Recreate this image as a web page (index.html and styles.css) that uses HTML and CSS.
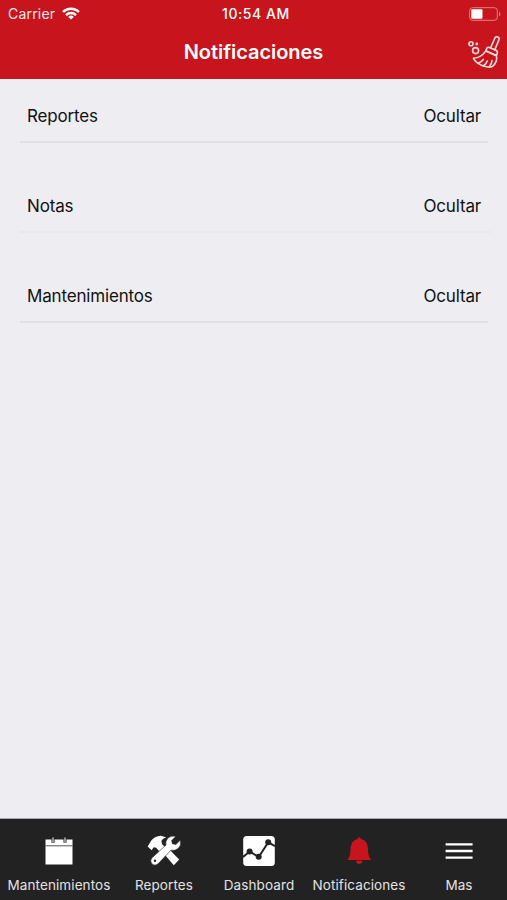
FILE: index.html
```html
<!DOCTYPE html>
<html lang="es">
<head>
  <meta charset="UTF-8" />
  <meta name="viewport" content="width=device-width, initial-scale=1" />
  <title>Notificaciones</title>
  <link rel="stylesheet" href="styles.css">
</head>
<body>

  <header class="header">
    <div class="status-bar">
      <div class="carrier">
        <span>Carrier</span>
        <svg class="wifi" viewBox="0 0 18 13" fill="none" stroke="#fff" stroke-width="2.4">
          <path d="M1 5a11.3 11.3 0 0 1 16 0" />
          <path d="M4 8.1a7.1 7.1 0 0 1 10 0" />
          <path d="M9 12.6 6.2 9.9a4 4 0 0 1 5.6 0z" fill="#fff" stroke="none" />
        </svg>
      </div>
      <div class="time">10:54 AM</div>
      <svg class="battery" viewBox="0 0 32 14">
        <rect x=".7" y=".7" width="27.6" height="12.6" rx="3" fill="none" stroke="#e58085" />
        <rect x="2.3" y="2.3" width="11.2" height="9.4" rx="1" fill="#fff" />
        <path d="M30 4.8q1.5.7 1.5 2.2T30 9.2z" fill="#e58085" />
      </svg>
    </div>
    <div class="nav-bar">
      <h1 class="title">Notificaciones</h1>
      <button class="clear" aria-label="Limpiar">
        <svg viewBox="0 0 32 34" fill="none" stroke="#ffdcdc" stroke-width="1.6" stroke-linejoin="round" stroke-linecap="round">
          <circle cx="3" cy="8.7" r="2" />
          <circle cx="8.8" cy="9" r=".6" fill="#ffdcdc" />
          <circle cx="7.6" cy="15.6" r="3" />
          <path d="M22.5 13 26.9 3Q28 1.1 29.8 1.9T31 4.6L26.8 14.8" />
          <path d="M18.8 13.2Q20 11.6 22 12.7L28 15.3Q30 16.4 29.2 18.6L28.4 20.4 17.8 15.8z" />
          <path d="M17.7 16.1Q13 22.7 5.4 23.3 8.8 29.6 18.5 31.8 22.5 32.8 24.5 31.3 29.7 26.8 28.4 20.8z" />
          <path d="M10.3 28.2Q13.5 26.8 15.3 24.4M15.4 30.8Q18.3 28.7 19.3 26M21.3 31.8Q23.8 28.9 24 25.6" />
        </svg>
      </button>
    </div>
  </header>

  <main class="sections">
    <div class="section">
      <span>Reportes</span>
      <a class="toggle">Ocultar</a>
    </div>
    <div class="section section-light">
      <span>Notas</span>
      <a class="toggle">Ocultar</a>
    </div>
    <div class="section">
      <span>Mantenimientos</span>
      <a class="toggle">Ocultar</a>
    </div>
  </main>

  <nav class="tab-bar">
    <a class="tab">
      <svg viewBox="0 0 34 34">
        <path d="M3.5 5.5h27v25h-27z" fill="#fff" />
        <path d="M3.5 11.8h27" stroke="#555" stroke-width="1" />
        <path d="M11 3.5v5.3M23 3.5v5.3" stroke="#222" stroke-width="3" />
        <path d="M11 3.5v5M23 3.5v5" stroke="#ddd" stroke-width="1.2" />
      </svg>
      <span>Mantenimientos</span>
    </a>
    <a class="tab">
      <svg viewBox="0 0 34 34">
        <path d="M17.6 20.6 22.6 15.8 32.2 25.6 26.8 31.2z" fill="#fff" />
        <path d="M.6 12.6 4.3 6.6Q8.1 2 14 1.8L19.4 3.6Q15.2 4.6 14.4 7.4L15 10 19.2 14.2 14 19.2 9.3 14Q7.6 12.6 6.3 13.8L4.7 16.2z" fill="#fff" />
        <path d="M28.8 2.4Q24.6.9 21 4 17.9 7.1 19 11L4.8 24Q2.6 26.8 4.9 29.9 8 32.4 11.1 29.8L23.9 16.2Q28.4 17.3 31.7 14 34.6 11 33.2 6.2L28.8 10.5 25.4 9.7 24.7 6.5z" fill="#fff" stroke="#222" stroke-width=".6" />
        <circle cx="8" cy="26.8" r="1.2" fill="#222" />
      </svg>
      <span>Reportes</span>
    </a>
    <a class="tab">
      <svg viewBox="0 0 34 34">
        <rect x="1.2" y="2" width="31.6" height="30" rx="3.5" fill="#fff" />
        <path d="M1 23 7.6 17.5 16.7 23 26.2 8.4 33 12.2" fill="none" stroke="#222" stroke-width="2" />
        <g fill="#222">
          <circle cx="7.6" cy="17.4" r="3" />
          <circle cx="16.7" cy="22.8" r="3" />
          <circle cx="26.2" cy="8.2" r="3" />
        </g>
      </svg>
      <span>Dashboard</span>
    </a>
    <a class="tab active">
      <svg viewBox="0 0 34 34" fill="currentColor">
        <path d="M17.2 3.2q1.4 0 1.7 1.7 6.3 1.4 7 8.7.2 8 1.7 10L29 26.1H5.4l1.5-2.5q1.5-2 1.7-10 .7-7.3 7-8.7.3-1.7 1.6-1.7zM14 26.8h6.4q-.4 3.2-3.2 3.2T14 26.8z" />
      </svg>
      <span>Notificaciones</span>
    </a>
    <a class="tab">
      <svg viewBox="0 0 34 34" stroke="#fff" stroke-width="2.3">
        <path d="M3.6 10.3h27M3.6 17h27M3.6 23.7h27" />
      </svg>
      <span>Mas</span>
    </a>
  </nav>

</body>
</html>
```

FILE: styles.css
```css
* {
  box-sizing: border-box;
}

body {
  margin: 0;
  height: 100vh;
  display: flex;
  flex-direction: column;
  overflow: hidden;
  background-color: #eeedf2;
  color: #111;
  font-family: Inter, "Liberation Sans", sans-serif;
}

/* red header: status bar + title */
.header {
  height: 79px;
  flex: none;
  background: #c8141c;
  color: #fff;
}

.status-bar {
  display: grid;
  grid-template-columns: 1fr auto 1fr;
  align-items: center;
  height: 27px;
  padding: 0 6px 0 11px;
  font-size: 14px;
  line-height: 27px;
}

.carrier {
  display: flex;
  align-items: center;
  gap: 7px;
  margin-left: -3px;
  color: #ffe9e9;
  letter-spacing: 0.2px;
}

.wifi {
  width: 18px;
  height: 13px;
}

.time {
  font-size: 14px;
  font-weight: 500;
  letter-spacing: 0.55px;
}

.battery {
  width: 32px;
  height: 14px;
  justify-self: end;
}

.nav-bar {
  display: grid;
  grid-template-columns: 1fr auto 1fr;
  align-items: center;
  height: 50px;
  padding: 0 7px;
}

.title {
  grid-column: 2;
  margin: 0;
  font-size: 20px;
  font-weight: 600;
  letter-spacing: -0.05px;
}

.clear {
  justify-self: end;
  padding: 0;
  border: none;
  background: transparent;
}

.clear svg {
  display: block;
  width: 32px;
  height: 34px;
}

/* section list */
.sections {
  flex: 1;
  display: flex;
  flex-direction: column;
  gap: 37px;
  padding: 11px 19px 0 20px;
}

.section {
  display: flex;
  justify-content: space-between;
  height: 53px;
  padding: 0 7px;
  border-bottom: 2px solid #e1e0e5;
  font-size: 17px;
  line-height: 52px;
  letter-spacing: -0.17px;
}

.section-light {
  margin-right: -3px;
  padding-right: 10px;
  border-bottom-color: #e9e8ed;
}

/* bottom tabs */
.tab-bar {
  flex: none;
  display: grid;
  grid-template-columns: 118px 92px 98px 102px 98px;
  height: 82px;
  padding-top: 15px;
  border-top: 1px solid #aaa;
  background: #222;
}

.tab {
  display: flex;
  flex-direction: column;
  align-items: center;
  color: #e3e3e3;
  font-size: 13.5px;
  line-height: 18px;
  letter-spacing: 0.1px;
}

.tab svg {
  width: 34px;
  height: 34px;
  margin-bottom: 8px;
}

.tab.active svg {
  color: #c8141c;
}
```
